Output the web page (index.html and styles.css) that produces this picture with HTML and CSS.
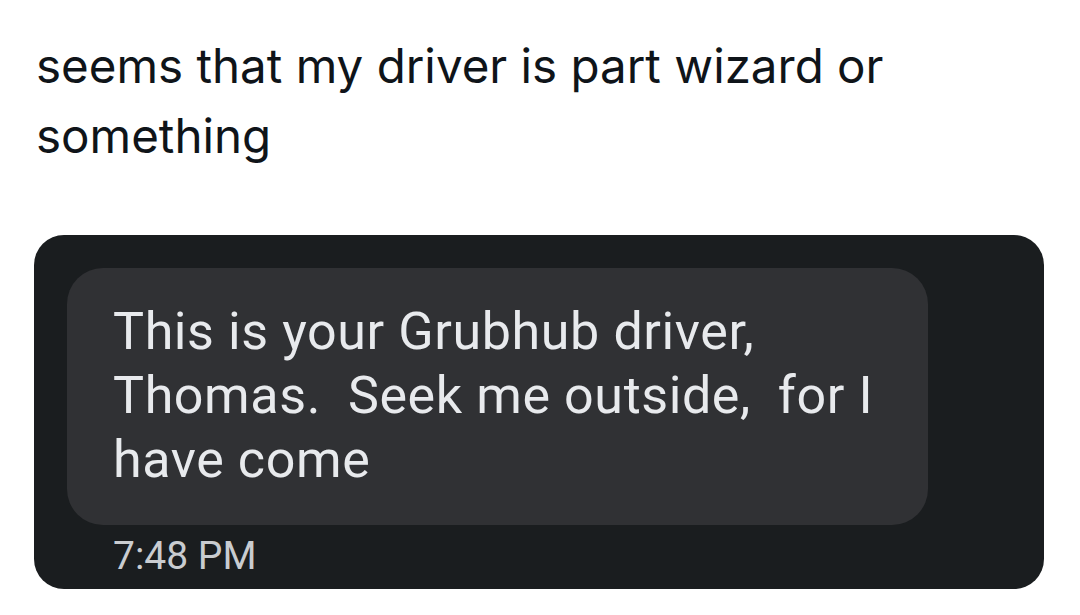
FILE: index.html
```html
<!DOCTYPE html>
<html>
    <head>
        <link rel="stylesheet" href="styles.css">
    </head>
    <body>
    <div id="post">
        <p class="post-text">seems that my driver is part wizard or something</p>
        <div class="shot">
            <div class="bubble">
                <p class="bubble-text">This is your Grubhub driver, Thomas.&nbsp; Seek me outside,&nbsp; for I have come</p>
            </div>
            <div class="stamp">7:48 PM</div>
        </div>
    </div>
    </body>
</html>
```

FILE: styles.css
```css
body {
    margin: 0;
    background-color: #ffffff;
}
#post {
    display: flex;
    flex-direction: column;
    padding: 31px 36px 0 34px;
}
.post-text {
    margin: 0 0 64px 2px;
    font-family: Inter, "Liberation Sans", sans-serif;
    font-size: 47.5px;
    line-height: 70px;
    color: #0f1419;
}
.shot {
    display: flex;
    flex-direction: column;
    width: 1010px;
    height: 354px;
    box-sizing: border-box;
    padding: 33px 0 0 33px;
    background-color: #1a1d1f;
    border-radius: 30px;
}
.bubble {
    width: 861px;
    height: 257px;
    box-sizing: border-box;
    padding: 32px 40px 0 46px;
    background-color: #303134;
    border-radius: 36px;
}
.bubble-text {
    margin: 0;
    font-family: Roboto, "Liberation Sans", sans-serif;
    font-size: 52px;
    letter-spacing: 0.6px;
    line-height: 64px;
    color: #e8eaed;
}
.stamp {
    margin: 8px 0 0 46px;
    font-family: Roboto, "Liberation Sans", sans-serif;
    font-size: 39px;
    line-height: 46px;
    color: #c9ccd0;
}
```
